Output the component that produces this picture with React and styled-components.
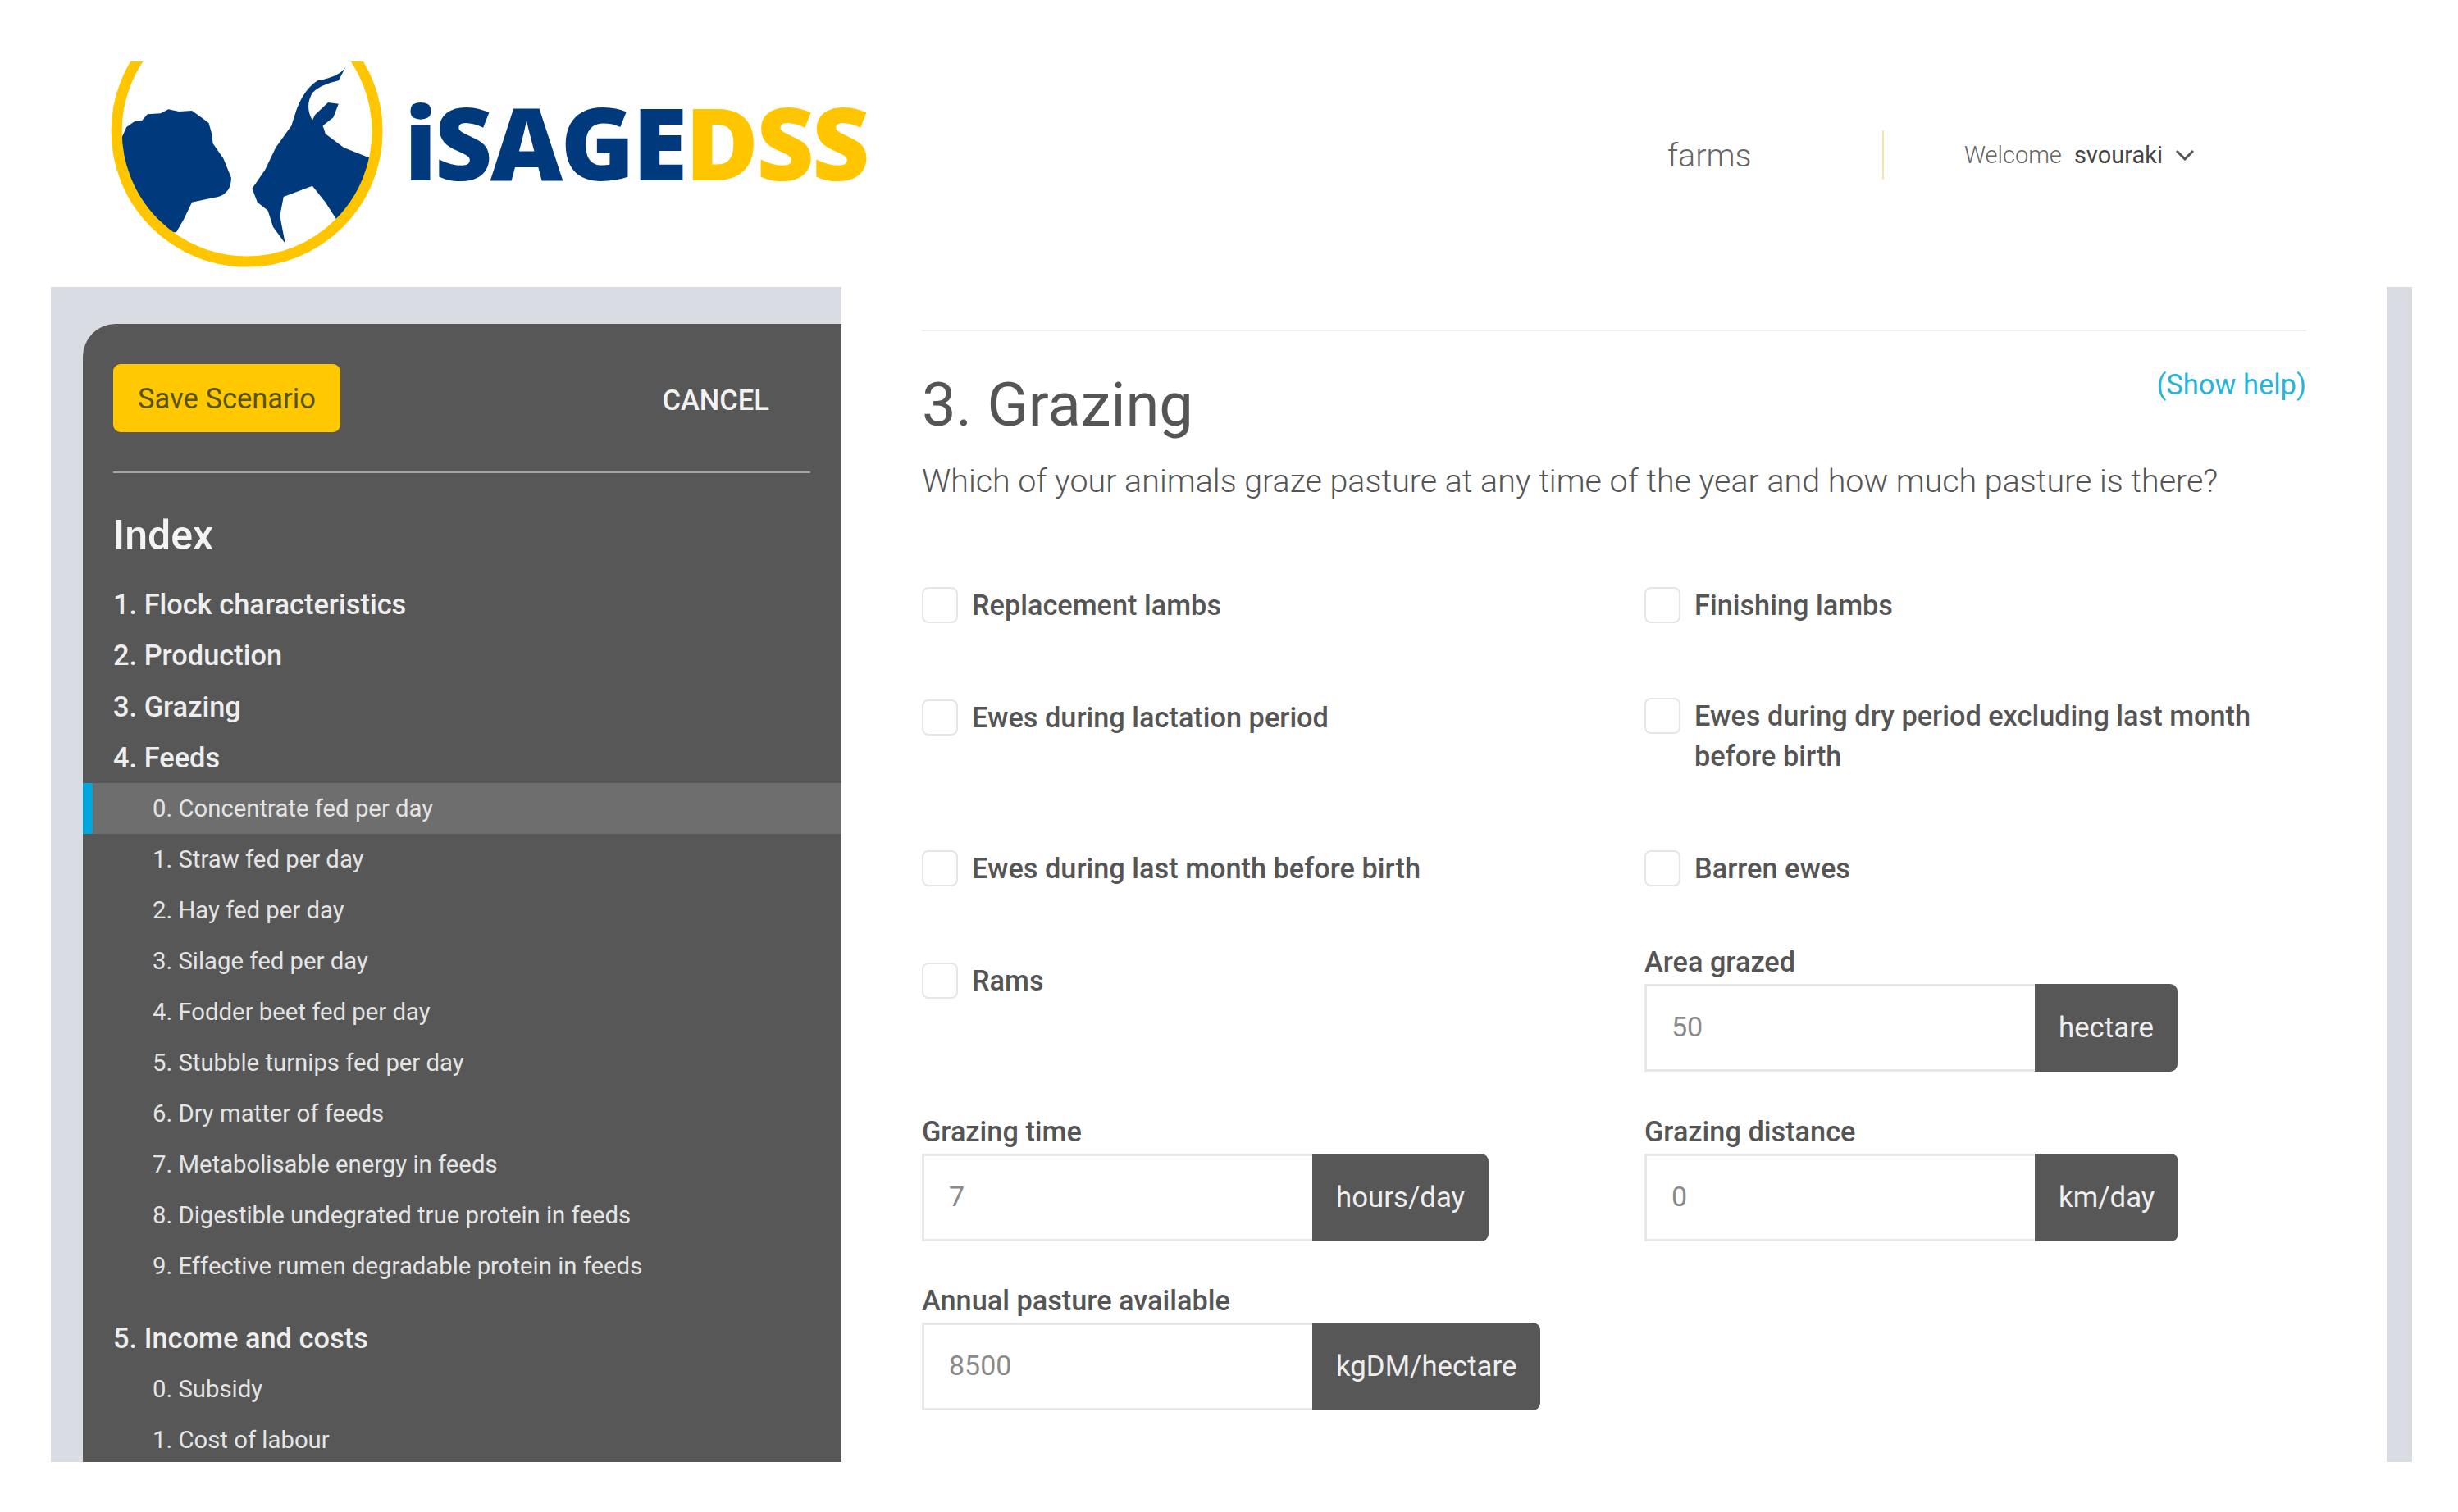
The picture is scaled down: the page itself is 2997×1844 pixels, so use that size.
import styled, { createGlobalStyle } from "styled-components";

const GlobalStyle = createGlobalStyle`
    html, body {
        margin: 0;
        padding: 0;
        background: #fff;
        overflow: hidden;
    }
    body {
        font-family: Roboto, "Liberation Sans", sans-serif;
    }
    * {
        box-sizing: border-box;
    }
`;

const Page = styled.div`
    width: 2997px;
    height: 1844px;
`;

const Header = styled.header`
    height: 350px;
    display: flex;
    padding: 50px 0 0 100px;
`;

const LogoLink = styled.div`
    display: flex;
    height: 300px;
`;

const LogoMark = styled.svg`
    display: block;
    width: 383px;
    height: 300px;
`;

const LogoText = styled.div`
    margin: 48px 0 0 10px;
    font-family: "Open Sans", sans-serif;
    font-weight: 800;
    font-size: 122px;
    line-height: 150px;
    letter-spacing: -2.7px;
    color: #003a7d;
    white-space: nowrap;

    span {
        color: #ffc600;
    }
`;

const Nav = styled.nav`
    margin-left: auto;
    margin-right: 321px;
    height: 60px;
    margin-top: 109px;
    display: flex;
    align-items: center;
`;

const NavLink = styled.div`
    width: 262px;
    font-size: 39.5px;
    font-weight: 300;
    color: #666;
`;

const NavDivider = styled.div`
    width: 2px;
    height: 60px;
    background: #f5e7a8;
    margin-right: 98px;
`;

const Welcome = styled.div`
    font-size: 29px;
    font-weight: 300;
    color: #666;
    margin-right: 15px;
`;

const UserName = styled.div`
    font-size: 29px;
    color: #444;
    margin-right: 15px;
`;

const Frame = styled.div`
    width: 2879px;
    height: 1433px;
    margin-left: 62px;
    display: flex;
    overflow: hidden;
`;

const SidebarShell = styled.div`
    width: 964px;
    flex: none;
    background: #d9dde3;
    padding: 45px 0 0 39px;
`;

const Sidebar = styled.aside`
    height: 100%;
    background: #575757;
    border-top-left-radius: 40px;
    padding-top: 49px;
    color: #eee;
`;

const ActionRow = styled.div`
    display: flex;
    justify-content: space-between;
    align-items: center;
    margin: 0 38px 0 37px;
    padding: 0 50px 48px 0;
    border-bottom: 2px solid #a5a5a5;
`;

const SaveButton = styled.button`
    width: 277px;
    height: 83px;
    padding: 0;
    border: none;
    border-radius: 9px;
    background: #ffc800;
    color: #57540f;
    font-family: inherit;
    font-size: 34.5px;
`;

const CancelButton = styled.div`
    margin-top: 4px;
    font-size: 34.5px;
    font-weight: 500;
    color: #f2f2f2;
`;

const IndexTitle = styled.h2`
    margin: 46px 0 23px 37px;
    font-size: 50px;
    line-height: 60px;
    font-weight: 500;
    color: #f4f4f4;
`;

const Section = styled.div`
    height: 62.3px;
    line-height: 62px;
    padding-left: 37px;
    font-size: 34.4px;
    font-weight: 500;
    color: #eee;
    margin-top: ${(p) => p.$gap || 0}px;
`;

const SubItem = styled.div`
    height: 62px;
    line-height: 62px;
    padding-left: ${(p) => (p.$active ? 73 : 85)}px;
    font-size: 29.3px;
    color: #e4e4e4;
    background: ${(p) => (p.$active ? "#6e6e6e" : "transparent")};
    border-left: ${(p) => (p.$active ? "12px solid #00a7dc" : "none")};
`;

const Main = styled.main`
    flex: 1;
    background: #fff;
    padding: 52px 98px 0;
`;

const TopRule = styled.hr`
    margin: 0;
    border: none;
    border-top: 2px solid #eee;
`;

const TitleRow = styled.div`
    display: flex;
    justify-content: space-between;
    height: 158px;
`;

const Title = styled.h1`
    margin: 40px 0 0;
    font-size: 74px;
    line-height: 100px;
    font-weight: 400;
    color: #555;
`;

const HelpLink = styled.a`
    margin-top: 40px;
    font-size: 34.5px;
    line-height: 50px;
    color: #27b4d6;
`;

const Subtitle = styled.p`
    margin: 0;
    font-size: 39.4px;
    line-height: 50px;
    font-weight: 300;
    color: #555;
`;

const FormGrid = styled.div`
    margin-top: 104px;
    display: grid;
    grid-template-columns: 881px 1fr;
    grid-template-rows: 137px 184px 117px 207px 206px 160px;
`;

const CheckRow = styled.label`
    display: flex;
    align-items: flex-start;
    gap: 17px;
    margin-top: ${(p) => p.$top || 0}px;
`;

const CheckBox = styled.span`
    flex: none;
    width: 44px;
    height: 44px;
    border: 2px solid #e6e6e6;
    border-radius: 8px;
    background: #fff;
`;

const CheckText = styled.span`
    margin-top: -2px;
    font-size: 34.3px;
    line-height: 49px;
    font-weight: 500;
    color: #555;
    max-width: 720px;
`;

const FieldLabel = styled.div`
    height: 46px;
    font-size: 34.3px;
    line-height: 38px;
    font-weight: 500;
    color: #555;
`;

const InputGroup = styled.div`
    display: flex;
    height: 107px;
`;

const ValueInput = styled.div`
    width: 476px;
    border: 3px solid #e8e8e8;
    border-right: none;
    padding-left: 30px;
    font-size: 34px;
    line-height: 99px;
    color: #8a8a8a;
`;

const Unit = styled.div`
    display: flex;
    align-items: center;
    padding: 0 29px 2px;
    border-radius: 0 9px 9px 0;
    background: #575757;
    color: #eee;
    font-size: 34.8px;
`;

const SideStrip = styled.div`
    width: 31px;
    flex: none;
    background: #d9dde3;
`;

const subItems = [
    "0. Concentrate fed per day",
    "1. Straw fed per day",
    "2. Hay fed per day",
    "3. Silage fed per day",
    "4. Fodder beet fed per day",
    "5. Stubble turnips fed per day",
    "6. Dry matter of feeds",
    "7. Metabolisable energy in feeds",
    "8. Digestible undegrated true protein in feeds",
    "9. Effective rumen degradable protein in feeds",
];

function Check({ children, top }) {
    return (
        <CheckRow $top={top}>
            <CheckBox />
            <CheckText>{children}</CheckText>
        </CheckRow>
    );
}

function Field({ label, value, unit }) {
    return (
        <div>
            <FieldLabel>{label}</FieldLabel>
            <InputGroup>
                <ValueInput>{value}</ValueInput>
                <Unit>{unit}</Unit>
            </InputGroup>
        </div>
    );
}

// drawn in the coordinates of a 1.568 x 3 stretched crop, hence the odd viewBox
function Logo() {
    return (
        <LogoMark viewBox="0 0 600 900" preserveAspectRatio="none">
            <defs>
                <clipPath id="ringCut">
                    <rect x="0" y="75" width="600" height="825" />
                </clipPath>
            </defs>
            <path
                fill="#003a7d"
                d="M72 370 L85 315 L100 295 L115 290 L125 268 L150 265 L165 250 L185 258 L210 255 L228 280 L242 300 L248 340 L250 375 L270 430 L285 500 Q285 555 260 570 L210 590 L195 650 L180 700 L170 700 L105 600 L72 480 Z"
            />
            <path
                fill="#003a7d"
                d="M505 90 Q495 130 450 145 Q425 175 410 250 L400 310 L370 390 L350 470 L325 540 L335 590 L355 620 L365 680 L388 740 L378 640 L385 570 L440 530 L465 590 L485 650 L495 650 L530 560 L552 430 L500 390 L465 340 L460 310 L480 280 L490 230 L470 225 L445 270 L440 290 Q425 240 440 190 Q455 160 490 145 Z"
            />
            <ellipse
                cx="315"
                cy="330"
                rx="249"
                ry="477"
                fill="none"
                stroke="#ffc600"
                strokeWidth="13"
                vectorEffect="non-scaling-stroke"
                clipPath="url(#ringCut)"
            />
        </LogoMark>
    );
}

export default function App() {
    return (
        <Page>
            <GlobalStyle />
            <Header>
                <LogoLink>
                    <Logo />
                    <LogoText>
                        iSAGE<span>DSS</span>
                    </LogoText>
                </LogoLink>
                <Nav>
                    <NavLink>farms</NavLink>
                    <NavDivider />
                    <Welcome>Welcome</Welcome>
                    <UserName>svouraki</UserName>
                    <svg width="24" height="14" viewBox="0 0 24 14">
                        <path d="M2 2 L12 12 L22 2" fill="none" stroke="#555" strokeWidth="3" />
                    </svg>
                </Nav>
            </Header>
            <Frame>
                <SidebarShell>
                    <Sidebar>
                        <ActionRow>
                            <SaveButton>Save Scenario</SaveButton>
                            <CancelButton>CANCEL</CancelButton>
                        </ActionRow>
                        <IndexTitle>Index</IndexTitle>
                        <Section>1. Flock characteristics</Section>
                        <Section>2. Production</Section>
                        <Section>3. Grazing</Section>
                        <Section>4. Feeds</Section>
                        {subItems.map((item, i) => (
                            <SubItem key={item} $active={i === 0}>
                                {item}
                            </SubItem>
                        ))}
                        <Section $gap={26}>5. Income and costs</Section>
                        <SubItem>0. Subsidy</SubItem>
                        <SubItem>1. Cost of labour</SubItem>
                    </Sidebar>
                </SidebarShell>
                <Main>
                    <TopRule />
                    <TitleRow>
                        <Title>3. Grazing</Title>
                        <HelpLink>(Show help)</HelpLink>
                    </TitleRow>
                    <Subtitle>
                        Which of your animals graze pasture at any time of the year and how much pasture is there?
                    </Subtitle>
                    <FormGrid>
                        <Check>Replacement lambs</Check>
                        <Check>Finishing lambs</Check>
                        <Check>Ewes during lactation period</Check>
                        <Check top={-2}>Ewes during dry period excluding last month before birth</Check>
                        <Check>Ewes during last month before birth</Check>
                        <Check>Barren ewes</Check>
                        <Check top={20}>Rams</Check>
                        <Field label="Area grazed" value="50" unit="hectare" />
                        <Field label="Grazing time" value="7" unit="hours/day" />
                        <Field label="Grazing distance" value="0" unit="km/day" />
                        <Field label="Annual pasture available" value="8500" unit="kgDM/hectare" />
                    </FormGrid>
                </Main>
                <SideStrip />
            </Frame>
        </Page>
    );
}
